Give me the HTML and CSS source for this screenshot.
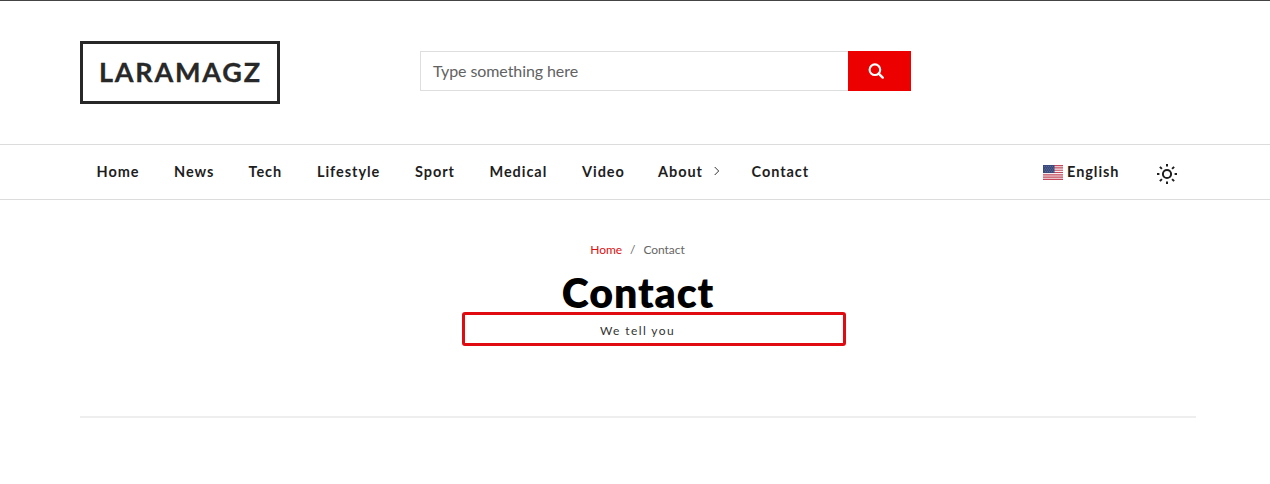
FILE: index.html
```html
<!DOCTYPE html>
<html lang="en">
<head>
<meta charset="utf-8">
<title>Contact</title>
<link rel="stylesheet" href="styles.css">
</head>
<body>
<header class="top">
  <a class="logo"><svg width="194" height="57"><text x="16" y="38" textLength="161" lengthAdjust="spacing">LARAMAGZ</text></svg></a>
  <form class="search">
    <div class="field">Type something here</div>
    <div class="submit"><svg width="16" height="16" viewBox="0 0 16 16" fill="none" stroke="#fff"><circle cx="6.9" cy="6.7" r="5.3" stroke-width="2.1"/><path d="M10.7 10.7l4 3.9" stroke-width="2.4" stroke-linecap="round"/></svg></div>
  </form>
</header>
<nav class="nav">
  <a class="home">Home</a><a class="news">News</a><a class="tech">Tech</a><a class="life">Lifestyle</a><a class="sport">Sport</a><a class="medical">Medical</a><a class="video">Video</a><a class="about"><span>About</span><svg width="6" height="10" viewBox="0 0 6 10" fill="none" stroke="#333"><path d="M.7 1l4 4-4 4"/></svg></a><a class="contact">Contact</a>
  <div class="lang">
    <svg width="20" height="15" viewBox="0 0 20 15"><path fill="#f6eef0" d="M0 0h20v15H0z"/><path stroke="#c4485b" stroke-width="1.15" d="M0 .6h20M0 2.9h20M0 5.2h20M0 7.5h20M0 9.8h20M0 12.1h20M0 14.4h20"/><path fill="#3a4a7c" d="M0 0h11.5v8H0z"/><path stroke="#7683ac" stroke-width=".7" stroke-dasharray=".8 1.2" d="M1 1.5h10M2 3.2h9M1 4.9h10M2 6.6h9"/></svg>
    <span>English</span>
  </div>
  <svg class="sun" width="20" height="20" viewBox="0 0 20 20" fill="none" stroke="#1e1e1e" stroke-width="2"><circle cx="10" cy="10" r="4.1"/><path d="M10 0v2.4M10 17.6V20M0 10h2.4M17.6 10H20M2.9 2.9l2 2M15.1 15.1l2 2M2.9 17.1l2-2M15.1 4.9l2-2"/></svg>
</nav>
<main class="page">
  <div class="crumbs"><a>Home</a><i>/</i><span>Contact</span></div>
  <h1>Contact</h1>
  <p class="tagline">We tell you</p>
  <hr>
</main>
</body>
</html>
```
FILE: styles.css
```css
* { box-sizing: border-box; }
body { margin: 0; height: 484px; overflow: hidden; background: #fff; border-top: 1px solid #444; font-family: Lato, sans-serif; }
.top { height: 143px; padding: 40px 0 0 80px; display: flex; }
.logo { width: 200px; height: 63px; border: 3px solid #282828; }
.logo svg { display: block; }
.logo text { font: 700 27px Lato, sans-serif; fill: #282828; stroke: #282828; stroke-width: .3px; }
.search { display: flex; width: 491px; height: 40px; margin: 10px 0 0 140px; }
.field { width: 428px; border: 1px solid #dedede; border-right: 0; padding-left: 12px; font-size: 16px; line-height: 38px; letter-spacing: -.08px; color: #626262; }
.submit { width: 63px; background: #ec0000; display: flex; align-items: center; padding-left: 20px; }
.nav { height: 56px; border: solid #dcdcdc; border-width: 1px 0; padding-left: 96.5px; display: flex; align-items: center; font-size: 14.5px; font-weight: 700; letter-spacing: .95px; color: #1e1e1e; white-space: nowrap; }
.nav a { flex: none; padding-bottom: 2px; }
.home { width: 77.5px; }
.news { width: 74.5px; }
.tech { width: 68.5px; }
.life { width: 98px; }
.sport { width: 74.5px; }
.medical { width: 92.5px; }
.video { width: 76px; }
.about { width: 93.5px; display: flex; align-items: center; }
.about span { width: 56px; }
.contact { width: 291.5px; }
.lang { display: flex; align-items: center; gap: 4px; width: 114px; }
.lang span { padding-bottom: 2px; }
.sun { margin-top: 4px; }
.page { padding: 0 74px 0 80px; }
.crumbs { display: flex; justify-content: center; gap: 8px; margin-top: 42px; padding-right: 1px; font-size: 12px; line-height: 16px; letter-spacing: -.05px; color: #666; }
.crumbs a { color: #dc1010; }
.crumbs i { font-style: normal; }
h1 { margin: 10px 0 0; font-size: 41px; line-height: 50px; letter-spacing: .9px; text-align: center; font-weight: 800; color: #000; height: 44px; }
.tagline { width: 384px; height: 34px; margin: 0 0 0 382px; border: 3px solid #e00b10; border-radius: 3px; padding-right: 33px; text-align: center; font-size: 12px; line-height: 31px; letter-spacing: 1.4px; color: #333; }
hr { border: 0; height: 2px; margin: 70px 0 0; background: #eee; }
```
